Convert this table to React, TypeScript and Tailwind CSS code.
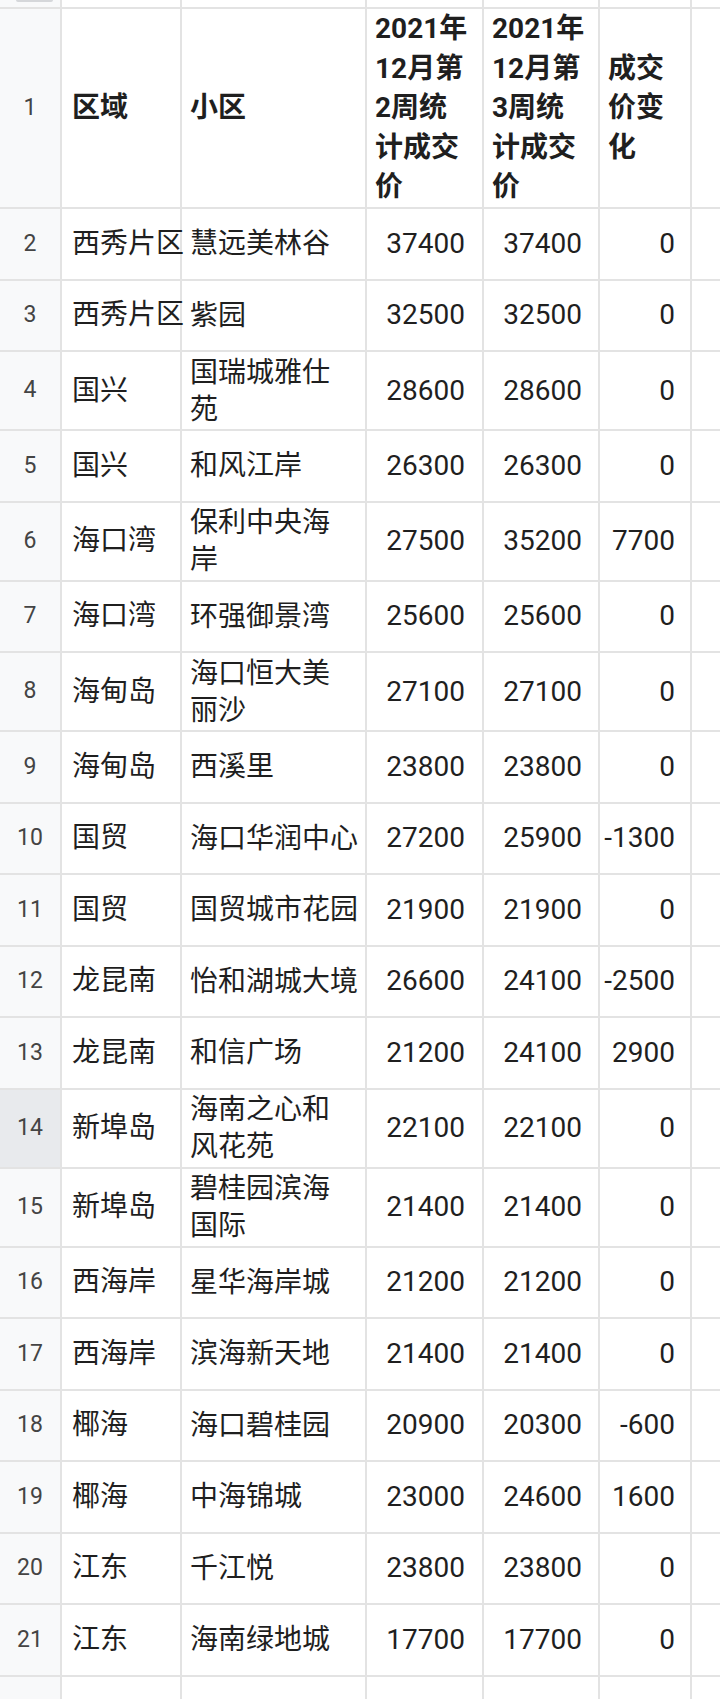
import React from "react";

type Row = {
  n: number;
  area: string;
  name: string[];
  w2: number;
  w3: number;
  diff: number;
};

const rows: Row[] = [
  { n: 2, area: "西秀片区", name: ["慧远美林谷"], w2: 37400, w3: 37400, diff: 0 },
  { n: 3, area: "西秀片区", name: ["紫园"], w2: 32500, w3: 32500, diff: 0 },
  { n: 4, area: "国兴", name: ["国瑞城雅仕", "苑"], w2: 28600, w3: 28600, diff: 0 },
  { n: 5, area: "国兴", name: ["和风江岸"], w2: 26300, w3: 26300, diff: 0 },
  { n: 6, area: "海口湾", name: ["保利中央海", "岸"], w2: 27500, w3: 35200, diff: 7700 },
  { n: 7, area: "海口湾", name: ["环强御景湾"], w2: 25600, w3: 25600, diff: 0 },
  { n: 8, area: "海甸岛", name: ["海口恒大美", "丽沙"], w2: 27100, w3: 27100, diff: 0 },
  { n: 9, area: "海甸岛", name: ["西溪里"], w2: 23800, w3: 23800, diff: 0 },
  { n: 10, area: "国贸", name: ["海口华润中心"], w2: 27200, w3: 25900, diff: -1300 },
  { n: 11, area: "国贸", name: ["国贸城市花园"], w2: 21900, w3: 21900, diff: 0 },
  { n: 12, area: "龙昆南", name: ["怡和湖城大境"], w2: 26600, w3: 24100, diff: -2500 },
  { n: 13, area: "龙昆南", name: ["和信广场"], w2: 21200, w3: 24100, diff: 2900 },
  { n: 14, area: "新埠岛", name: ["海南之心和", "风花苑"], w2: 22100, w3: 22100, diff: 0 },
  { n: 15, area: "新埠岛", name: ["碧桂园滨海", "国际"], w2: 21400, w3: 21400, diff: 0 },
  { n: 16, area: "西海岸", name: ["星华海岸城"], w2: 21200, w3: 21200, diff: 0 },
  { n: 17, area: "西海岸", name: ["滨海新天地"], w2: 21400, w3: 21400, diff: 0 },
  { n: 18, area: "椰海", name: ["海口碧桂园"], w2: 20900, w3: 20300, diff: -600 },
  { n: 19, area: "椰海", name: ["中海锦城"], w2: 23000, w3: 24600, diff: 1600 },
  { n: 20, area: "江东", name: ["千江悦"], w2: 23800, w3: 23800, diff: 0 },
  { n: 21, area: "江东", name: ["海南绿地城"], w2: 17700, w3: 17700, diff: 0 },
];

const cell = "border-r-2 border-[#e3e3e3] flex items-center shrink-0";

function EmptyRow({ h }: { h: string }) {
  return (
    <div className={`flex border-b-2 border-[#e3e3e3] ${h}`}>
      <div className={`${cell} w-[62px] bg-[#f8f9fa]`} />
      <div className={`${cell} w-[120px]`} />
      <div className={`${cell} w-[185px]`} />
      <div className={`${cell} w-[117px]`} />
      <div className={`${cell} w-[116px]`} />
      <div className={`${cell} w-[92px]`} />
      <div className="flex-1" />
    </div>
  );
}

export default function App() {
  return (
    <div className="w-[720px] h-[1699px] overflow-hidden bg-white text-[#1f1f1f] font-[family-name:Roboto,'Noto_Sans_CJK_SC',sans-serif]">
      {/* partial row above header */}
      <div className="relative">
        <EmptyRow h="h-[9px]" />
        <div className="absolute left-[16px] top-0 w-[37px] h-[2px] rounded-b bg-[#d5d7da]" />
      </div>

      {/* header row */}
      <div className="flex border-b-2 border-[#e3e3e3] h-[200px] font-bold text-[28px] leading-[39.5px]">
        <div className={`${cell} w-[62px] bg-[#f8f9fa] justify-center font-normal text-[23px] text-[#444]`}>1</div>
        <div className={`${cell} w-[120px] pl-[10px]`}>区域</div>
        <div className={`${cell} w-[185px] pl-2`}>小区</div>
        <div className={`${cell} w-[117px] pl-2`}>
          <div>
            2021年<br />12月第<br />2周统<br />计成交<br />价
          </div>
        </div>
        <div className={`${cell} w-[116px] pl-2`}>
          <div>
            2021年<br />12月第<br />3周统<br />计成交<br />价
          </div>
        </div>
        <div className={`${cell} w-[92px] pl-2`}>
          <div>
            成交<br />价变<br />化
          </div>
        </div>
        <div className="flex-1" />
      </div>

      {rows.map((r) => (
        <div
          key={r.n}
          className={`flex border-b-2 border-[#e3e3e3] text-[28px] ${r.name.length > 1 ? "h-[79px]" : "h-[71.5px]"}`}
        >
          <div
            className={`${cell} w-[62px] justify-center text-[23px] text-[#444] ${r.n === 14 ? "bg-[#e8eaed]" : "bg-[#f8f9fa]"}`}
          >
            {r.n}
          </div>
          <div className={`${cell} w-[120px] pl-[10px] whitespace-nowrap`}>{r.area}</div>
          <div className={`${cell} w-[185px] pl-2 whitespace-nowrap`}>
            <div className="leading-[37px]">
              {r.name.map((l, i) => (
                <div key={i}>{l}</div>
              ))}
            </div>
          </div>
          <div className={`${cell} w-[117px] justify-end pr-[17px]`}>{r.w2}</div>
          <div className={`${cell} w-[116px] justify-end pr-[16px]`}>{r.w3}</div>
          <div className={`${cell} w-[92px] justify-end pr-[15px]`}>{r.diff}</div>
          <div className="flex-1" />
        </div>
      ))}

      <EmptyRow h="h-[40px]" />
    </div>
  );
}
